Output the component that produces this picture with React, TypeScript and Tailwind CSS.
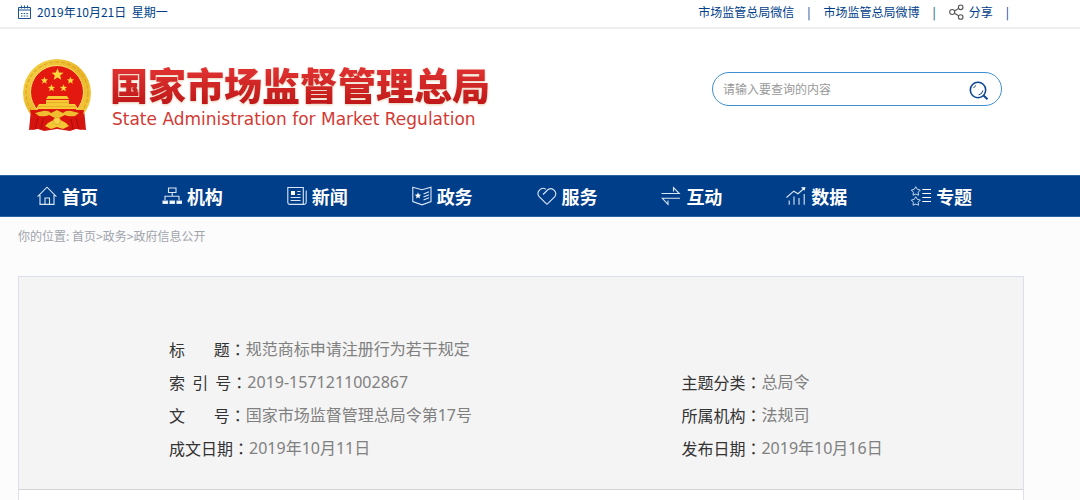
import React from 'react';

const NavIcon = ({ children }: { children: React.ReactNode }) => (
  <svg
    viewBox="0 0 20 20"
    className="w-5 h-5 shrink-0"
    fill="none"
    stroke="#dbe6f3"
    strokeWidth="1.1"
    aria-hidden="true"
  >
    {children}
  </svg>
);

const STAR = 'M0 -4.4 L1.2 -1.4 L4.3 -1.3 L1.9 0.7 L2.7 3.8 L0 2.1 L-2.7 3.8 L-1.9 0.7 L-4.3 -1.3 L-1.2 -1.4 Z';
const WIDE_STAR = 'M0 -4.6 L1.6 -1.9 L4.5 -1.3 L2.4 0.9 L2.8 3.9 L0 2.8 L-2.8 3.9 L-2.4 0.9 L-4.5 -1.3 L-1.6 -1.9 Z';

const navItems = [
  {
    label: '首页',
    icon: <path d="M0.6 10.6 L10 1.2 L19.4 10.6 M3 9 V18.4 H17 V9 M8 18.4 V12 H12.5 V18.4" />,
  },
  {
    label: '机构',
    icon: (
      <>
        <path d="M6.5 2 H14 V6.5 H6.5 Z M10.2 6.5 V10 M3 14 V10.2 H17 V14" />
        <path d="M1 15 H5.5 V17.5 H1 Z M8 15 H12.5 V17.5 H8 Z M15 15 H19.5 V17.5 H15 Z" fill="#fff" />
      </>
    ),
  },
  {
    label: '新闻',
    icon: (
      <>
        <path d="M0.8 1.5 H16.3 V18.4 H2.6 Q0.8 18.4 0.8 16.5 Z M16.3 18.4 Q19.2 18.6 19.2 16 V4.5" />
        <path d="M10.3 5.5 H13.5 M10.3 8.5 H13.5 M3.6 11.5 H13.5 M3.6 14.5 H13.5" />
        <rect x="4" y="5" width="4" height="4" fill="#fff" stroke="none" />
      </>
    ),
  },
  {
    label: '政务',
    icon: (
      <>
        <path d="M0.8 1.3 L10 3.8 L19 1.3 V15.5 L10 18.8 L0.8 15.5 Z" />
        <path d="M11.5 8 L17 5.8 M11.5 11 L17 8.8 M11.5 14 L17 11.8" />
        <path d={STAR} transform="translate(6 9.6) scale(.75)" fill="#fff" stroke="none" />
      </>
    ),
  },
  {
    label: '服务',
    icon: <path d="M10 18.3 L2.2 10.6 A5 5 0 0 1 9 3.4 M6 8.5 L11.1 3.5 A5 5 0 0 1 17.8 10.6 L10 18.3" />,
  },
  {
    label: '互动',
    icon: <path d="M0.5 7.5 H18.3 L12.5 1.5 V5.5 M19 12.3 H1.3 L7 18.3 V14.5" />,
  },
  {
    label: '数据',
    icon: (
      <>
        <path d="M0.5 11.5 L7.8 5.2 L12 7.7 L18.5 2" />
        <path d="M3.2 14.5 V18.8 M8 10.5 V18.8 M13 12 V18.8 M18.2 8 V18.8" />
        <path d="M15 1.2 H19.6 L18.3 4.8 Z" fill="#fff" stroke="none" />
      </>
    ),
  },
  {
    label: '专题',
    icon: (
      <>
        <path d={WIDE_STAR} transform="translate(4.8 5.3)" strokeWidth="0.9" />
        <path d={WIDE_STAR} transform="translate(4.8 15.3)" strokeWidth="0.9" />
        <path d="M11.3 3.5 H20 M11.3 7.5 H20 M11.3 11.5 H20 M11.3 15.5 H20" stroke="#fff" />
      </>
    ),
  },
];

// Non-breaking spaces spread the short labels to the width of four characters
const details = [
  [{ label: '标\u00a0\u00a0\u00a0\u00a0\u00a0\u00a0\u00a0\u00a0题', value: '规范商标申请注册行为若干规定' }],
  [
    { label: '索\u00a0\u00a0引\u00a0\u00a0号', value: '2019-1571211002867' },
    { label: '主题分类', value: '总局令' },
  ],
  [
    { label: '文\u00a0\u00a0\u00a0\u00a0\u00a0\u00a0\u00a0\u00a0号', value: '国家市场监督管理总局令第17号' },
    { label: '所属机构', value: '法规司' },
  ],
  [
    { label: '成文日期', value: '2019年10月11日' },
    { label: '发布日期', value: '2019年10月16日' },
  ],
];

const Emblem = () => (
  <svg viewBox="0 0 70 73" className="w-[70px] h-[73px] shrink-0" aria-hidden="true">
    <defs>
      <linearGradient id="gold" x1="0" y1="0" x2="1" y2="1">
        <stop offset="0" stopColor="#f6d84a" />
        <stop offset="0.5" stopColor="#eab52a" />
        <stop offset="1" stopColor="#f5cf3e" />
      </linearGradient>
    </defs>
    <path d="M9 50 L7 71 L16 70 L22 72 L35 70 L48 72 L54 70 L64 71 L62 50 Z" fill="#d4140f" />
    <circle cx="35" cy="34" r="34" fill="url(#gold)" />
    <circle cx="35" cy="34" r="31" fill="none" stroke="#dca526" strokeWidth="1.2" strokeDasharray="4 2" />
    <circle cx="35" cy="33" r="26.5" fill="#e3180f" stroke="#f9e06a" strokeWidth="1" />
    <path d={STAR} transform="translate(35.5 15.5) scale(1.4)" fill="#ffd83e" />
    <path d={STAR} transform="translate(22.5 21.5) scale(.85)" fill="#ffd83e" />
    <path d={STAR} transform="translate(48.5 21.5) scale(.85)" fill="#ffd83e" />
    <path d={STAR} transform="translate(29.5 29) scale(.85)" fill="#ffd83e" />
    <path d={STAR} transform="translate(41.5 29) scale(.85)" fill="#ffd83e" />
    <path d="M26 37 H45 L47 40 H24 Z M24 41 H47 V45 H53 L55 48 V50 H15 V48 L17 45 H24 Z" fill="#f6c935" />
    <path d="M24 43.5 H47 M16 47.5 H54" stroke="#dfa322" strokeWidth="0.7" />
    <path d="M8 51 H62 L61 56 L56 62 L60 71 L47 68 L35 70 L23 68 L10 71 L14 62 L9 56 Z" fill="#d9140f" />
    <path d="M13 54 L21 52 Q26 51 29 54 L35 51 L41 54 Q44 51 49 52 L57 54 L53 57 Q46 58 43 56 L35 60 L27 56 Q24 58 17 57 Z" fill="#efbd2f" />
    <path d="M26 64 Q35 57 44 64 L47 67 L41 70 L35 68 L29 70 L23 67 Z" fill="#f3c733" />
    <circle cx="35" cy="62" r="3.5" fill="#f7d54b" stroke="#dca526" strokeWidth="0.8" />
    <path d="M16 59 L13 70 M21 60 L19 70 M54 59 L57 70 M49 60 L51 70" stroke="#a90d0a" strokeWidth="1" />
  </svg>
);

const Divider = () => <span aria-hidden="true">|</span>;

const TopBar = () => (
  <div className="flex items-center justify-between pl-[18px] pr-[71px] pb-1 bg-white border-b-2 border-[#eeeeee] text-xs leading-[23px] text-[#003e8a]">
    <div className="flex items-center gap-[6px]">
      <svg viewBox="0 0 13 14" className="w-[13px] h-[14px]" fill="none" stroke="#1c5292" aria-hidden="true">
        <path d="M0.5 2.5 H12.5 V13.5 H0.5 Z M0.5 5 H12.5" />
        <path d="M3.5 0.5 V3.5 M6.5 0.5 V3.5 M9.5 0.5 V3.5" />
        <path d="M3 8.5 H10.5 M3 11 H10.5" strokeDasharray="1.5 1.2" />
      </svg>
      <time dateTime="2019-10-21">2019年10月21日&nbsp;&nbsp;星期一</time>
    </div>
    <div className="flex items-center gap-[13px]">
      <a href="#wechat">市场监管总局微信</a>
      <Divider />
      <a href="#weibo">市场监管总局微博</a>
      <Divider />
      <a href="#share" className="flex items-center gap-[5px]">
        <svg viewBox="0 0 15 16" className="w-[15px] h-4" fill="none" stroke="#555" strokeWidth="1.1" aria-hidden="true">
          <circle cx="3.2" cy="8" r="2.5" />
          <circle cx="11.7" cy="3.3" r="2.3" />
          <circle cx="11.7" cy="13" r="2.3" />
          <path d="M5.5 7 L9.6 4.5 M5.5 9.3 L9.6 11.8" />
        </svg>
        分享
      </a>
      <Divider />
    </div>
  </div>
);

const Header = () => (
  <header className="flex items-start justify-between pl-[22px] pr-[78px] pt-[30px] pb-[43px] bg-white">
    <a href="#home" className="flex items-start gap-[18px]">
      <Emblem />
      <div className="pt-[5px]">
        <h1 className="text-[38px] leading-10 font-black bg-clip-text text-transparent bg-gradient-to-b from-[#e43434] to-[#c01818] drop-shadow-[0_1px_1px_#e6cdb4]">
          国家市场监督管理总局
        </h1>
        <p className="mt-[5px] pl-[2px] font-['DejaVu_Sans',sans-serif] text-[17px] leading-5 text-[#d23a34]">
          State Administration for Market Regulation
        </p>
      </div>
    </a>
    <form
      className="mt-[13px] flex items-center w-[290px] h-[34px] pl-[10px] pr-3 rounded-full border border-[#3f8fd0] bg-white"
      onSubmit={(e) => e.preventDefault()}
    >
      <input
        type="text"
        aria-label="请输入要查询的内容"
        placeholder="请输入要查询的内容"
        className="flex-1 min-w-0 text-xs outline-none placeholder:text-[#999999]"
      />
      <button type="submit" aria-label="搜索" className="pt-1">
        <svg viewBox="0 0 20 20" className="w-5 h-5" fill="none" stroke="#0f4891" aria-hidden="true">
          <circle cx="9" cy="9" r="7.7" strokeWidth="1.6" />
          <path d="M14.5 14.5 L18.5 18.3" strokeWidth="2" />
          <path d="M13.8 9.5 A4.8 4.8 0 0 1 9.5 13.8 M4.6 7 A5 5 0 0 1 7 4.6" strokeWidth="1" />
        </svg>
      </button>
    </form>
  </header>
);

const Navigation = () => (
  <nav className="grid grid-cols-8 pl-[37px] pr-11 bg-[#003e8a] border-y border-[#2c62a0]">
    {navItems.map((item) => (
      <a key={item.label} href={`#${item.label}`} className="flex items-center gap-[5px] text-lg leading-10 font-bold text-white">
        <NavIcon>{item.icon}</NavIcon>
        {item.label}
      </a>
    ))}
  </nav>
);

export default function App() {
  return (
    <div className="min-h-screen flex flex-col bg-[#fcfcfc] font-['Noto_Sans_CJK_SC',sans-serif]">
      <TopBar />
      <Header />
      <Navigation />

      <main className="flex-1 flex flex-col ml-[18px] mr-14">
        {/* Breadcrumb */}
        <div className="pt-[9px] pb-[30px] text-xs leading-5 text-[#a0a4ac]">
          你的位置: <a href="#home">首页</a>&gt;<a href="#affairs">政务</a>&gt;<a href="#open">政府信息公开</a>
        </div>

        {/* Document details */}
        <article className="flex-1 border border-b-0 border-[#dbe1ec] bg-white">
          <div className="pl-[150px] pt-14 pb-6 bg-[#f4f4f4] border-b border-[#d4d4d4]">
            {details.map((row) => (
              <dl key={row[0].label} className="grid grid-cols-[3fr_2fr] text-base leading-[33px]">
                {row.map((field) => (
                  <div key={field.label} className="flex">
                    <dt className="text-[#333333]">
                      {field.label}
                      <span className="font-['Noto_Sans_CJK_TC',sans-serif]" lang="zh-Hant">：</span>
                    </dt>
                    <dd className="font-['Noto_Sans','Noto_Sans_CJK_SC',sans-serif] text-[#808080]">{field.value}</dd>
                  </div>
                ))}
              </dl>
            ))}
          </div>
        </article>
      </main>
    </div>
  );
}
